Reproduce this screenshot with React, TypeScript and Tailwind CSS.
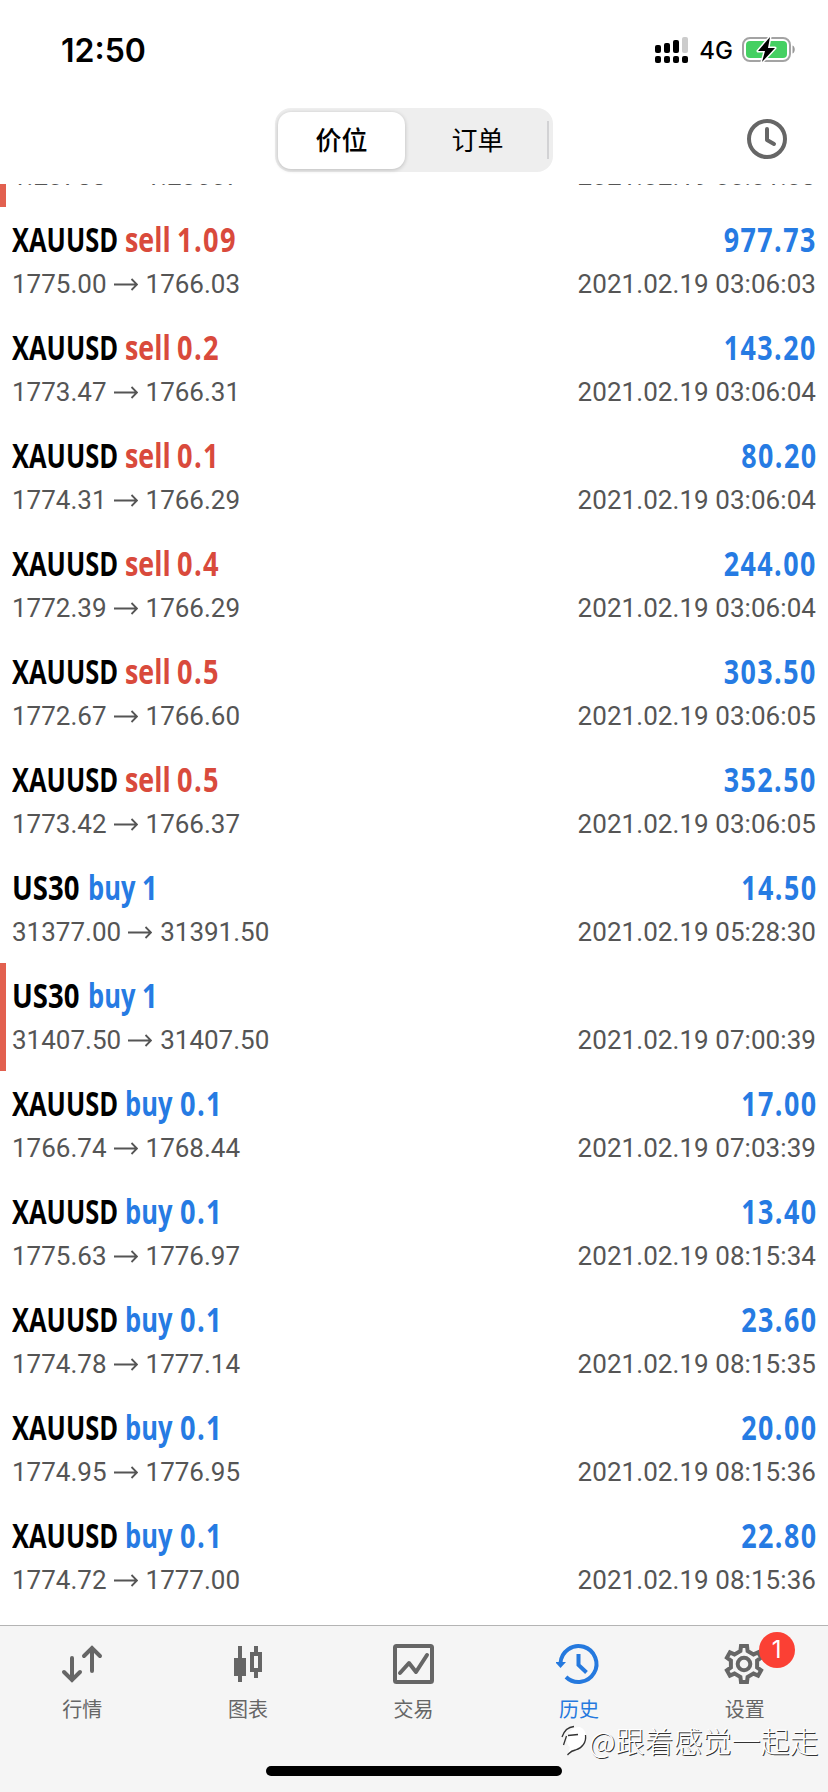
import type { ReactNode } from "react";

type Side = "buy" | "sell";
type Deal = {
  symbol: "XAUUSD" | "US30" | "GBPUSD";
  side: Side;
  volume: string;
  from: string;
  to: string;
  time: string;
  profit?: string;
  flagged?: boolean;
};

const gold = (side: Side, volume: string, from: string, to: string, time: string, profit: string): Deal => ({
  symbol: "XAUUSD", side, volume, from, to, time: `2021.02.19 ${time}`, profit,
});

const deals: Deal[] = [
  { symbol: "GBPUSD", side: "buy", volume: "1", from: "1.20733", to: "1.20657", time: "2021.02.19 00:01:03", flagged: true },
  gold("sell", "1.09", "1775.00", "1766.03", "03:06:03", "977.73"),
  gold("sell", "0.2", "1773.47", "1766.31", "03:06:04", "143.20"),
  gold("sell", "0.1", "1774.31", "1766.29", "03:06:04", "80.20"),
  gold("sell", "0.4", "1772.39", "1766.29", "03:06:04", "244.00"),
  gold("sell", "0.5", "1772.67", "1766.60", "03:06:05", "303.50"),
  gold("sell", "0.5", "1773.42", "1766.37", "03:06:05", "352.50"),
  { symbol: "US30", side: "buy", volume: "1", from: "31377.00", to: "31391.50", time: "2021.02.19 05:28:30", profit: "14.50" },
  { symbol: "US30", side: "buy", volume: "1", from: "31407.50", to: "31407.50", time: "2021.02.19 07:00:39", flagged: true },
  gold("buy", "0.1", "1766.74", "1768.44", "07:03:39", "17.00"),
  gold("buy", "0.1", "1775.63", "1776.97", "08:15:34", "13.40"),
  gold("buy", "0.1", "1774.78", "1777.14", "08:15:35", "23.60"),
  gold("buy", "0.1", "1774.95", "1776.95", "08:15:36", "20.00"),
  gold("buy", "0.1", "1774.72", "1777.00", "08:15:36", "22.80"),
];

function StatusBar() {
  return (
    <div className="flex h-[100px] shrink-0 items-center justify-between pr-[32px] pl-[61px]">
      <span className="pt-[2px] font-[Inter] text-[32px] leading-none font-semibold text-black">12:50</span>
      <div className="flex items-center">
        <svg width="34" height="26" viewBox="0 0 34 26" className="mr-[10px]">
          <rect x="0" y="8" width="6" height="8" rx="2" />
          <rect x="9" y="6" width="6" height="10" rx="2" />
          <rect x="18" y="3" width="6" height="13" rx="2" />
          <rect x="27" y="0" width="6" height="16" rx="2" fill="#ccc" />
          <rect x="0" y="19" width="6" height="7" rx="2" />
          <rect x="9" y="19" width="6" height="7" rx="2" />
          <rect x="18" y="19" width="6" height="7" rx="2" />
          <rect x="27" y="19" width="6" height="7" rx="2" />
        </svg>
        <span className="mr-[9px] pt-[2px] font-[Inter] text-[24px] leading-none font-medium text-black">4G</span>
        <svg width="54" height="28" viewBox="0 0 54 28">
          <rect x="1" y="2" width="47" height="23" rx="7" fill="none" stroke="#a3a3a3" strokeWidth="2" />
          <rect x="4" y="5" width="41" height="17" rx="4" fill="#45d062" />
          <path d="M50.500 9.500c3 .8 3 7.200 0 8z" fill="#999" />
          <path d="M28 1 16 15h7l-3 11 13-14h-7z" fill="#000" stroke="#fff" strokeWidth="3" paintOrder="stroke" strokeLinejoin="round" />
        </svg>
      </div>
    </div>
  );
}

function Header() {
  return (
    <div className="grid h-[84px] shrink-0 grid-cols-[1fr_auto_1fr] items-start pt-[8px]">
      <span />
      <div className="flex h-[64px] w-[278px] items-center rounded-[16px] bg-[#eeeeee] p-[3px] font-['Noto_Sans_CJK_SC',sans-serif] text-[26px] text-black">
        <div className="flex h-[57px] w-[127px] items-center justify-center rounded-[13px] bg-white pb-[3px] font-medium shadow-[0_1px_4px_rgba(0,0,0,0.22)]">
          价位
        </div>
        <div className="flex flex-1 items-center justify-center pb-[3px] pl-[3px]">订单</div>
        <span className="mr-[1px] h-[38px] w-[2px] bg-[#d2d2d4]" />
      </div>
      <svg width="42" height="42" viewBox="0 0 42 42" fill="none" stroke="#666" strokeWidth="4" className="mt-[10px] mr-[40px] justify-self-end">
        <circle cx="21" cy="21" r="18" />
        <path d="M21 11v11l7 4" strokeLinecap="round" strokeLinejoin="round" />
      </svg>
    </div>
  );
}

function DealRow({ deal }: { deal: Deal }) {
  const tone = deal.side === "sell" ? "text-[#d94a3c]" : "text-[#267be3]";
  const symbolBox = deal.symbol === "US30" ? "w-[76px]" : "w-[113px]";
  const symbolScale = deal.symbol === "US30" ? "scale-x-[0.81]" : "scale-x-[0.75]";
  const sideBox = deal.side === "sell" ? "w-[52px]" : deal.symbol === "US30" ? "w-[54px]" : "w-[55px]";
  const sideScale = deal.side === "sell" ? "scale-x-[0.79]" : "scale-x-[0.75]";
  return (
    <div className={`flex h-[108px] shrink-0 flex-col gap-[10px] border-l-[6px] pt-[12px] pr-[12px] pl-[6px] ${deal.flagged ? "border-[#e2604f]" : "border-transparent"}`}>
      <div className="flex h-[40px] justify-between font-['Open_Sans'] text-[34px] leading-[40px] font-bold whitespace-nowrap">
        <div className="flex">
          <span className={`${symbolBox} text-black`}>
            <span className={`inline-block origin-left ${symbolScale}`}>{deal.symbol}</span>
          </span>
          <span className={`${sideBox} ${tone}`}>
            <span className={`inline-block origin-left ${sideScale}`}>{deal.side}</span>
          </span>
          <span className={`inline-block origin-left scale-x-[0.8] tracking-[1.700px] ${tone}`}>{deal.volume}</span>
        </div>
        <span className="-mr-[1px] inline-block origin-right scale-x-[0.79] tracking-[1.800px] text-[#267be3]">{deal.profit}</span>
      </div>
      <div className="flex h-[30px] justify-between font-[Roboto] text-[26px] leading-[30px] whitespace-nowrap text-[#555]">
        <div className="flex">
          <span>{deal.from}</span>
          <svg width="24" height="30" viewBox="0 0 24 30" fill="none" stroke="#555" strokeWidth="1.800" className="mr-[8px] ml-[7px]">
            <path d="M0 15.500h23M17.500 10l5.500 5.500-5.500 5.500" />
          </svg>
          <span>{deal.to}</span>
        </div>
        <span className="tracking-[0.060px]">{deal.time}</span>
      </div>
    </div>
  );
}

function Tab({ label, active, children }: { label: string; active?: boolean; children: ReactNode }) {
  return (
    <div className={`flex flex-1 flex-col items-center pt-[16px] ${active ? "text-[#2579de]" : "text-[#666]"}`}>
      <div className="relative h-[44px] w-[48px]">{children}</div>
      <span className="mt-[9px] -ml-[1px] font-['Noto_Sans_CJK_SC',sans-serif] text-[20px] leading-[28px]">{label}</span>
    </div>
  );
}

const icon = { width: 48, height: 44, viewBox: "0 0 48 44", fill: "none", stroke: "currentColor", strokeWidth: 4 };

function TabBar() {
  return (
    <div className="relative flex h-[167px] shrink-0 border-t border-[#b4b4b4] bg-[#f5f5f5]">
      <Tab label="行情">
        <svg {...icon} strokeLinecap="round">
          <path d="M13 16v22M5 30l8 8 8-8M33 29V6M25 14l8-8 8 8" />
        </svg>
      </Tab>
      <Tab label="图表">
        <svg {...icon}>
          <path d="M16 4v36M32 4v8M32 28v8" />
          <path d="M10 16h12v18H10z" fill="currentColor" stroke="none" />
          <path d="M28 12h8v16h-8z" />
        </svg>
      </Tab>
      <Tab label="交易">
        <svg {...icon} strokeLinejoin="round">
          <rect x="5" y="4" width="37" height="36" rx="1.500" />
          <path d="M10 31l9-10 7 9 11-17" strokeLinecap="round" />
        </svg>
      </Tab>
      <Tab label="历史" active>
        <svg {...icon}>
          <path d="M4.500 21a18 18 0 1 1 5.500 14" />
          <path d="M22.500 12v11l8 7.500" />
          <path d="M-1 20h11l-5.500 6z" fill="currentColor" stroke="none" />
        </svg>
      </Tab>
      <Tab label="设置">
        <svg {...icon}>
          <path d="M20 4H26L26.600 9 32.500 12.400 37.100 10.400 40.100 15.600 36.100 18.600V25.400L40.100 28.400 37.100 33.600 32.500 31.600 26.600 35 26 40H20L19.400 35 13.500 31.600 8.900 33.600 5.900 28.400 9.900 25.400V18.600L5.900 15.600 8.900 10.400 13.500 12.400 19.400 9Z" />
          <circle cx="23" cy="22" r="6.300" />
        </svg>
        <span className="absolute -top-[10px] left-[37.500px] flex h-[36px] w-[36px] items-center justify-center rounded-full bg-[#fb4034] font-[Inter] text-[24px] text-white">1</span>
      </Tab>
      <div className="absolute bottom-[16px] left-[266px] h-[10px] w-[296px] rounded-full bg-black" />
      <div className="absolute top-[94px] left-[560px] flex items-center text-white">
        <svg width="29" height="36" viewBox="0 0 29 36" fill="none">
          <path d="M8 13C10 8 15 4.500 20 5c5 2 7 7 5 13s-8 9-13 10l-4 4 2-7c-3-2-4-6-2-12z" fill="#fff" />
          <path d="M2 15C4 9 8 5 14 4.500M8 13.500l10-1M6.500 14 3.500 23M25.500 13c1 7-3 13-10 15-5 1-5 2-8 5" stroke="#333" strokeWidth="1.300" />
        </svg>
        <span className="font-['Noto_Sans_CJK_SC',sans-serif] text-[29px] leading-[40px] font-light whitespace-nowrap [text-shadow:1px_1px_0_#333]">@跟着感觉一起走</span>
      </div>
    </div>
  );
}

export default function App() {
  return (
    <div className="flex h-[1792px] w-[828px] flex-col overflow-hidden bg-white">
      <StatusBar />
      <Header />
      <div className="flex min-h-0 flex-1 flex-col justify-end overflow-hidden pb-[14px]">
        {deals.map((deal, i) => <DealRow key={i} deal={deal} />)}
      </div>
      <TabBar />
    </div>
  );
}
